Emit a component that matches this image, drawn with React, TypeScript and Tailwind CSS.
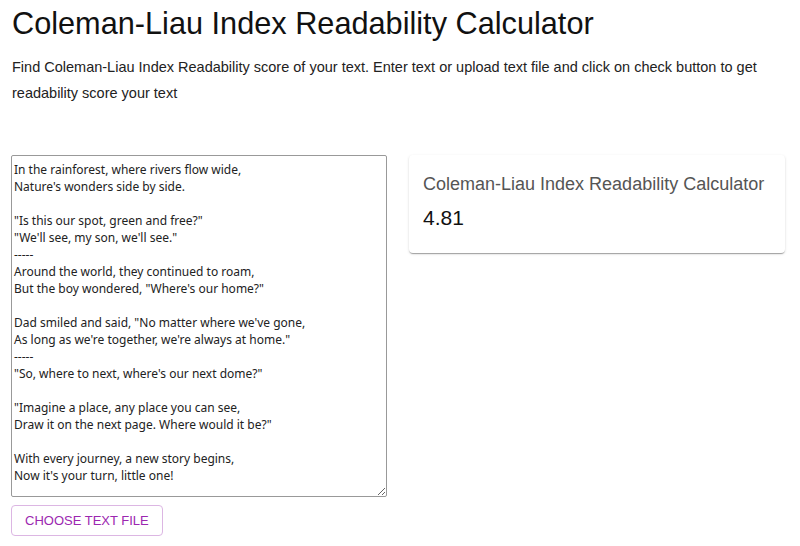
import React from "react";

const poem = `In the rainforest, where rivers flow wide,
Nature's wonders side by side.

"Is this our spot, green and free?"
"We'll see, my son, we'll see."
-----
Around the world, they continued to roam,
But the boy wondered, "Where's our home?"

Dad smiled and said, "No matter where we've gone,
As long as we're together, we're always at home."
-----
"So, where to next, where's our next dome?"

"Imagine a place, any place you can see,
Draw it on the next page. Where would it be?"

With every journey, a new story begins,
Now it's your turn, little one!`;

export default function App() {
  return (
    <div className="bg-white w-[800px] h-[546px] overflow-hidden text-black" style={{ fontFamily: '"Liberation Sans", Arial, sans-serif' }}>
      <div className="pl-[11px] pr-[15px]">
        <h1 className="text-[30.7px] leading-[36px] font-normal pt-[6px] pl-[1px] text-[#111]">Coleman-Liau Index Readability Calculator</h1>
        <p className="text-[14.5px] leading-[26px] mt-[12px] pl-[1px] text-[#222]">
          Find Coleman-Liau Index Readability score of your text. Enter text or upload text file and click on check button to get readability score your text
        </p>
        <div className="flex gap-[22px] mt-[49px]">
          <div className="w-[376px] flex flex-col items-start">
            <textarea
              className="w-[376px] h-[342px] border border-[#999] rounded-[2px] px-[2px] pt-[5px] pb-[2px] text-[12px] leading-[17px] text-[#222] resize-y outline-none"
              style={{ fontFamily: '"Noto Sans", sans-serif' }}
              defaultValue={poem}
            />
            <button className="mt-[8px] h-[31px] px-[13px] border border-[#dcb6e3] rounded-[4px] text-[#9c27b0] text-[13px] uppercase">
              Choose text file
            </button>
          </div>
          <div className="w-[376px]">
            <div className="rounded-[4px] bg-white shadow-[0_2px_1px_-1px_rgba(0,0,0,0.2),0_1px_1px_0_rgba(0,0,0,0.14),0_1px_3px_0_rgba(0,0,0,0.12)] px-[14px] pt-[17px] pb-[21px]">
              <div className="text-[18px] leading-[24px] text-[#555]">Coleman-Liau Index Readability Calculator</div>
              <div className="text-[21px] leading-[28px] mt-[8px] text-[#111]">4.81</div>
            </div>
          </div>
        </div>
      </div>
    </div>
  );
}
